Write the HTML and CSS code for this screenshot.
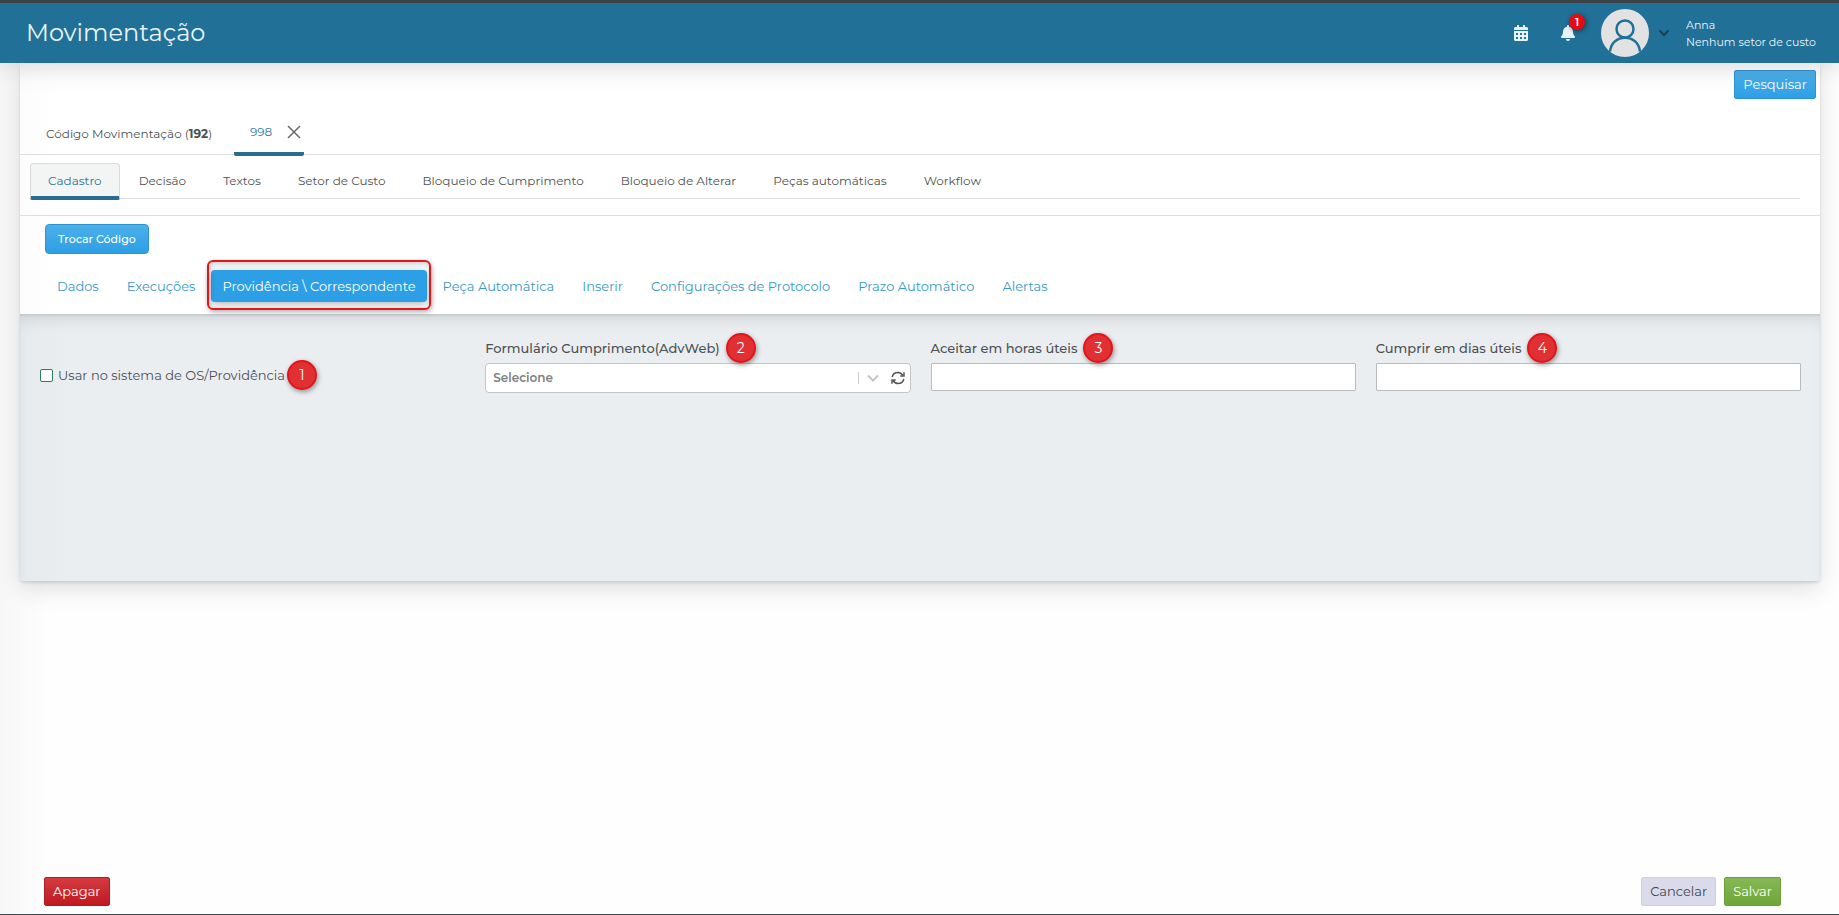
FILE: index.html
```html
<!DOCTYPE html>
<html lang="pt-BR">
<head>
    <meta charset="UTF-8" />
    <title>Movimentação</title>
    <meta name="viewport" content="width=device-width, initial-scale=1" />
    <link rel="stylesheet" href="styles.css">
</head>
<body>
    <header class="topbar">
        <h1>Movimentação</h1>
        <button class="icon-btn calendar" type="button" aria-label="Agenda">
            <svg viewBox="0 0 448 512" width="14" height="16" fill="currentColor"><path d="M0 464c0 26.500 21.500 48 48 48h352c26.500 0 48-21.500 48-48V192H0v272zm320-196c0-6.600 5.400-12 12-12h40c6.600 0 12 5.400 12 12v40c0 6.600-5.400 12-12 12h-40c-6.600 0-12-5.400-12-12v-40zm0 128c0-6.600 5.400-12 12-12h40c6.600 0 12 5.400 12 12v40c0 6.600-5.400 12-12 12h-40c-6.600 0-12-5.400-12-12v-40zM192 268c0-6.600 5.400-12 12-12h40c6.600 0 12 5.400 12 12v40c0 6.600-5.400 12-12 12h-40c-6.600 0-12-5.400-12-12v-40zm0 128c0-6.600 5.400-12 12-12h40c6.600 0 12 5.400 12 12v40c0 6.600-5.400 12-12 12h-40c-6.600 0-12-5.400-12-12v-40zM64 268c0-6.600 5.400-12 12-12h40c6.600 0 12 5.400 12 12v40c0 6.600-5.400 12-12 12H76c-6.600 0-12-5.400-12-12v-40zm0 128c0-6.600 5.400-12 12-12h40c6.600 0 12 5.400 12 12v40c0 6.600-5.400 12-12 12H76c-6.600 0-12-5.400-12-12v-40zM400 64h-48V16c0-8.800-7.200-16-16-16h-32c-8.800 0-16 7.200-16 16v48H160V16c0-8.800-7.200-16-16-16h-32c-8.800 0-16 7.200-16 16v48H48C21.500 64 0 85.500 0 112v48h448v-48c0-26.500-21.500-48-48-48z"/></svg>
        </button>
        <button class="icon-btn bell" type="button" aria-label="Notificações">
            <svg viewBox="0 0 448 512" width="14" height="16" fill="currentColor"><path d="M224 512c35.320 0 63.970-28.650 63.970-64H160.030c0 35.350 28.650 64 63.970 64zm215.390-149.710c-19.320-20.760-55.470-51.990-55.470-154.290 0-77.700-54.480-139.900-127.940-155.160V32c0-17.670-14.320-32-31.980-32s-31.980 14.330-31.980 32v20.840C118.560 68.100 64.080 130.300 64.080 208c0 102.300-36.150 133.530-55.470 154.290-6 6.450-8.660 14.160-8.610 21.710.11 16.400 12.980 32 32.100 32h383.800c19.120 0 32-15.600 32.100-32 .05-7.550-2.610-15.270-8.610-21.710z"/></svg>
            <span class="count">1</span>
        </button>
        <button class="icon-btn account" type="button" aria-label="Conta">
            <svg viewBox="0 0 48 48" width="48" height="48">
                <circle cx="24" cy="24" r="24" fill="#e2e2e2"/>
                <g fill="none" stroke="#217097" stroke-width="2.500">
                    <circle cx="24" cy="20" r="8.500"/>
                    <path d="M9 42.500C10 34 16 28.700 24 28.700S38 34 39 42.500"/>
                </g>
            </svg>
            <svg class="caret" viewBox="0 0 12 8" width="12" height="8" fill="none" stroke="#1c3e50" stroke-width="2"><path d="M1.500 1.500 6 6l4.500-4.500"/></svg>
        </button>
        <div class="user">
            <div>Anna</div>
            <div>Nenhum setor de custo</div>
        </div>
    </header>

    <main class="card">
        <div class="search-row">
            <button class="btn blue" type="button">Pesquisar</button>
        </div>

        <nav class="record-tabs">
            <a class="list" href="#">Código Movimentação (<b>192</b>)</a>
            <div class="record">
                <a href="#">998</a>
                <button type="button" aria-label="Fechar">
                    <svg viewBox="0 0 14 14" width="14" height="14" fill="none" stroke="#6a6a6a" stroke-width="1.500"><path d="M1 1l12 12M13 1L1 13"/></svg>
                </button>
            </div>
        </nav>

        <nav class="tabs">
            <a class="active" href="#">Cadastro</a>
            <a href="#">Decisão</a>
            <a href="#">Textos</a>
            <a href="#">Setor de Custo</a>
            <a href="#">Bloqueio de Cumprimento</a>
            <a href="#">Bloqueio de Alterar</a>
            <a href="#">Peças automáticas</a>
            <a href="#">Workflow</a>
        </nav>

        <div class="code-row">
            <button class="btn blue change" type="button">Trocar Código</button>
        </div>

        <nav class="pills">
            <a href="#">Dados</a>
            <a href="#">Execuções</a>
            <a class="active" href="#">Providência \ Correspondente</a>
            <a href="#">Peça Automática</a>
            <a href="#">Inserir</a>
            <a href="#">Configurações de Protocolo</a>
            <a href="#">Prazo Automático</a>
            <a href="#">Alertas</a>
        </nav>

        <section class="panel">
            <div class="check">
                <input type="checkbox" id="usarOs" />
                <label for="usarOs">Usar no sistema de OS/Providência</label>
                <span class="step">1</span>
            </div>
            <div class="field">
                <div class="caption"><label for="formulario">Formulário Cumprimento(AdvWeb)</label><span class="step">2</span></div>
                <div class="select-box">
                    <select id="formulario"><option>Selecione</option></select>
                    <svg class="arrow" viewBox="0 0 12 8" width="12" height="8" fill="none" stroke="#c4c4c4" stroke-width="2"><path d="M1 1.500l5 5 5-5"/></svg>
                    <button type="button" aria-label="Atualizar">
                        <svg viewBox="0 0 14 14" width="14" height="14" fill="none" stroke="#555" stroke-width="1.500"><path d="M1.200 6C1.800 3 4 1.500 7 1.500c2.200 0 3.700 1 5 3M12.800 8c-.6 3-2.800 4.500-5.800 4.500-2.200 0-3.700-1-5-3"/><path d="M13 1.300v3.700H9.300M1 12.700V9h3.700"/></svg>
                    </button>
                </div>
            </div>
            <div class="field">
                <div class="caption"><label for="horas">Aceitar em horas úteis</label><span class="step">3</span></div>
                <input type="text" id="horas" />
            </div>
            <div class="field">
                <div class="caption"><label for="dias">Cumprir em dias úteis</label><span class="step">4</span></div>
                <input type="text" id="dias" />
            </div>
        </section>
    </main>

    <footer class="actions">
        <button class="btn red" type="button">Apagar</button>
        <button class="btn gray" type="button">Cancelar</button>
        <button class="btn green" type="button">Salvar</button>
    </footer>
</body>
</html>
```
FILE: styles.css
```css
* {
    box-sizing: border-box;
}
body {
    margin: 0;
    min-height: 100vh;
    display: flex;
    flex-direction: column;
    font-family: Montserrat, Inter, sans-serif;
    font-size: 13px;
    line-height: 16px;
    color: #4d5154;
    background: linear-gradient(to right, #f7f7f7, #fefefe 50px);
    border-top: 3px solid #3b4347;
    border-bottom: 1px solid #45484b;
}
a {
    color: inherit;
    text-decoration: none;
}
button, input, select {
    font: inherit;
}
button {
    cursor: pointer;
}
svg {
    display: block;
}

/* top bar */
.topbar {
    position: relative;
    z-index: 1;
    display: flex;
    align-items: center;
    height: 60px;
    padding: 0 23px 0 26px;
    color: #e9f5fb;
    background: #217097;
    box-shadow: 0 4px 24px rgba(0, 0, 0, .15);
}
.topbar h1 {
    flex: 1;
    margin: 0;
    font-size: 24px;
    font-weight: 400;
    line-height: 32px;
}
.icon-btn {
    position: relative;
    padding: 0;
    border: 0;
    color: inherit;
    background: none;
}
.calendar {
    margin-right: 33px;
}
.bell {
    margin-right: 26px;
}
.count {
    position: absolute;
    top: -11px;
    left: 8px;
    width: 16px;
    height: 16px;
    border-radius: 50%;
    font-size: 11px;
    font-weight: 600;
    color: #fff;
    background: #e60a14;
    box-shadow: 1px 1px 5px rgba(0, 0, 0, .5);
}
.account {
    display: flex;
    align-items: center;
    gap: 9px;
    margin-right: 16px;
}
.user {
    min-width: 130px;
    padding-top: 1px;
    font-size: 11px;
    line-height: 17px;
}

/* buttons */
.btn {
    height: 29px;
    padding: 0 8px 1px;
    border: 1px solid;
    border-radius: 2px;
    color: #fff;
}
.blue {
    border-color: #2d94d2;
    background: linear-gradient(#4cb0e9, #2d9fe6);
}
.red {
    border-color: #a92026;
    background: linear-gradient(#d43a40, #c01a20);
}
.gray {
    border-color: #cdcfe2;
    color: #44454f;
    background: #d9dbeb;
}
.green {
    border-color: #6b9f38;
    background: linear-gradient(#86b856, #6fa638);
}

/* card */
.card {
    margin: 0 19px 0 20px;
    background: linear-gradient(to right, #fcfcfc, #fff 40px);
    border-radius: 0 0 4px 4px;
    box-shadow: 0 2px 3px rgba(0, 0, 0, .12), 0 8px 24px rgba(0, 0, 0, .12);
}
.search-row {
    display: flex;
    justify-content: flex-end;
    padding: 7px 4px 0;
}
.record-tabs {
    display: flex;
    align-items: center;
    height: 56px;
    padding: 0 26px;
    border-bottom: 1px solid #dcdee0;
    font-size: 12px;
}
.record-tabs .list {
    min-width: 172px;
    margin-right: 16px;
    padding-top: 14px;
}
.record {
    display: flex;
    align-items: center;
    justify-content: space-between;
    align-self: flex-end;
    width: 70px;
    height: 45px;
    margin-bottom: -2px;
    padding: 0 3px 0 16px;
    border-bottom: 4px solid #2a6c8e;
    border-radius: 2px;
    color: #347ca6;
}
.record button {
    padding: 0;
    border: 0;
    background: none;
}
.tabs {
    display: flex;
    gap: 1px;
    height: 36px;
    margin: 8px 20px 16px 10px;
    border-bottom: 1px solid #dcdee0;
    font-size: 12px;
}
.tabs a {
    height: 37px;
    padding: 10px 18px;
}
.tabs .active {
    border: 1px solid #d9dcde;
    border-bottom: 4px solid #2a6c8e;
    border-radius: 4px 4px 2px 2px;
    padding: 9px 17px;
    color: #2f7596;
    background: #f3f4f4;
}
.code-row {
    padding: 8px 25px 7px;
    border-top: 1px solid #dcdee0;
}
.change {
    height: 30px;
    padding: 0 12px;
    border-radius: 4px;
    font-size: 11px;
    font-weight: 500;
}
.pills {
    display: flex;
    align-items: center;
    gap: 4px;
    height: 53px;
    padding: 0 25px 3px;
    color: #3799c8;
}
.pills a {
    padding: 8px 12px;
    border-radius: 4px;
}
.pills .active {
    position: relative;
    padding: 8px 11px;
    color: #fff;
    background: #2d9fe6;
    box-shadow: 0 2px 8px rgba(0, 0, 0, .3);
}
.pills .active::after {
    content: "";
    position: absolute;
    inset: -10px -4px -8px;
    border: 2px solid #e2151b;
    border-radius: 6px;
    box-shadow: 1px 2px 5px rgba(0, 0, 0, .3), inset 1px 2px 5px rgba(0, 0, 0, .2);
}

/* form */
.panel {
    display: grid;
    grid-template-columns: repeat(4, 1fr);
    gap: 20px;
    align-items: start;
    min-height: 267px;
    padding: 18px 19px 18px 20px;
    border-radius: 0 0 4px 4px;
    background: linear-gradient(to right, #e7eaec, #eaeef1 50px);
    box-shadow: inset 0 12px 16px -8px rgba(0, 0, 0, .12), inset 0 2px 2px rgba(0, 0, 0, .06);
}
.check {
    display: flex;
    align-items: center;
    margin-top: 28px;
}
.check input {
    appearance: none;
    width: 13px;
    height: 13px;
    margin: 0 5px 0 0;
    border: 1px solid #2f7d5c;
    border-radius: 2px;
    background: #fff;
}
.check .step {
    margin-left: 2px;
}
.caption {
    display: flex;
    align-items: center;
    height: 31px;
    font-weight: 500;
}
.caption .step {
    margin-left: 6px;
}
.step {
    position: relative;
    flex: none;
    width: 30px;
    height: 30px;
    border: 2px solid #e2151b;
    border-radius: 50%;
    font-size: 14px;
    font-weight: 400;
    line-height: 26px;
    text-align: center;
    color: #fff;
    background: #e03034;
    box-shadow: 1px 2px 5px rgba(0, 0, 0, .4);
}
.field > input {
    display: block;
    width: 100%;
    height: 28px;
    padding: 0 8px;
    border: 1px solid #b9bcbe;
    border-radius: 1px;
    background: #fff;
}
.select-box {
    display: flex;
    align-items: center;
    height: 30px;
    padding: 0 5px 0 7px;
    border: 1px solid #c3c6c9;
    border-radius: 4px;
    background: #fff;
}
.select-box select {
    flex: 1;
    appearance: none;
    padding: 0;
    border: 0;
    font-size: 12px;
    font-weight: 600;
    color: #808080;
    background: none;
}
.arrow {
    box-sizing: content-box;
    padding: 2px 12px 2px 8px;
    border-left: 1px solid #ccc;
}
.select-box button {
    padding: 0;
    border: 0;
    background: none;
}

/* footer */
.actions {
    display: flex;
    gap: 8px;
    margin-top: auto;
    padding: 8px 58px 8px 44px;
}
.actions .red {
    margin-right: auto;
}
```
